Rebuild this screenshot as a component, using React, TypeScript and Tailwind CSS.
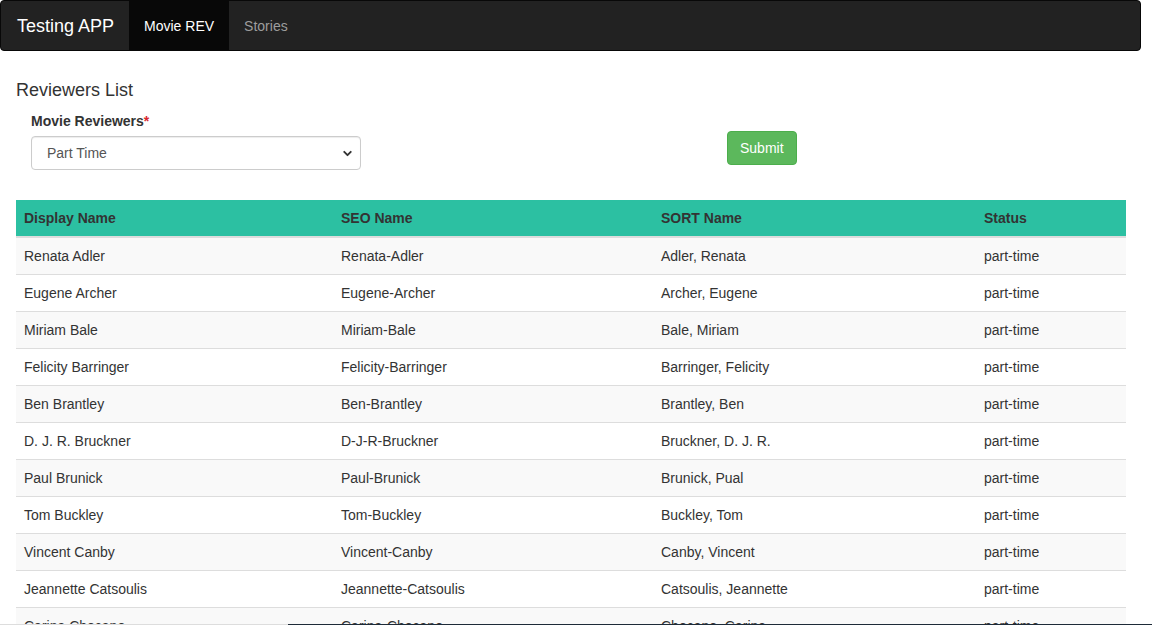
import { ChevronDown } from "lucide-react";

const reviewers = [
  ["Renata Adler", "Renata-Adler", "Adler, Renata"],
  ["Eugene Archer", "Eugene-Archer", "Archer, Eugene"],
  ["Miriam Bale", "Miriam-Bale", "Bale, Miriam"],
  ["Felicity Barringer", "Felicity-Barringer", "Barringer, Felicity"],
  ["Ben Brantley", "Ben-Brantley", "Brantley, Ben"],
  ["D. J. R. Bruckner", "D-J-R-Bruckner", "Bruckner, D. J. R."],
  ["Paul Brunick", "Paul-Brunick", "Brunick, Pual"],
  ["Tom Buckley", "Tom-Buckley", "Buckley, Tom"],
  ["Vincent Canby", "Vincent-Canby", "Canby, Vincent"],
  ["Jeannette Catsoulis", "Jeannette-Catsoulis", "Catsoulis, Jeannette"],
  ["Carina Chocano", "Carina-Chocano", "Chocano, Carina"],
];

function NavBar() {
  return (
    <nav className="flex h-[51px] items-stretch rounded-[4px] border border-[#080808] bg-[#222222]">
      <a className="flex items-center pl-[16px] pr-[15px] text-[18px] text-white" href="#">
        Testing APP
      </a>
      <a className="flex items-center bg-[#080808] px-[15px] text-[14px] text-white" href="#">
        Movie REV
      </a>
      <a className="flex items-center px-[15px] text-[14px] text-[#9d9d9d]" href="#">
        Stories
      </a>
    </nav>
  );
}

export default function App() {
  return (
    <div
      className="relative w-[1141px] bg-white text-[14px] leading-[20px] text-[#333333]"
      style={{ fontFamily: '"Liberation Sans", Arial, sans-serif' }}
    >
      <NavBar />

      <div className="px-[16px]">
        <h3 className="mt-[29px] text-[18px] leading-[20px]">Reviewers List</h3>

        <div className="mt-[11px] flex items-start">
          <div className="ml-[15px] w-[330px]">
            <label className="block font-bold">
              Movie Reviewers<span className="text-[#d9262f]">*</span>
            </label>
            <div className="relative mt-[5px]">
              <select
                className="h-[34px] w-full appearance-none rounded-[4px] border border-[#cccccc] bg-white pl-[15px] text-[14px] text-[#555555] shadow-[inset_0_1px_1px_rgba(0,0,0,0.075)]"
                defaultValue="part-time"
              >
                <option value="all">All</option>
                <option value="full-time">Full Time</option>
                <option value="part-time">Part Time</option>
              </select>
              <ChevronDown
                className="pointer-events-none absolute right-[7px] top-[11px] h-[13px] w-[13px] text-[#333333]"
                strokeWidth={3.5}
              />
            </div>
          </div>
          <button className="ml-[366px] mt-[20px] h-[34px] rounded-[4px] border border-[#4cae4c] bg-[#5cb85c] px-[12px] text-[14px] text-white">
            Submit
          </button>
        </div>

        <table className="mt-[30px] w-[1110px] table-fixed border-collapse">
          <colgroup>
            <col className="w-[317px]" />
            <col className="w-[320px]" />
            <col className="w-[323px]" />
            <col className="w-[150px]" />
          </colgroup>
          <thead>
            <tr className="bg-[#2cc0a2]">
              {["Display Name", "SEO Name", "SORT Name", "Status"].map((h) => (
                <th className="h-[37px] border-b-2 border-[#dddddd] px-[8px] text-left font-bold" key={h}>
                  {h}
                </th>
              ))}
            </tr>
          </thead>
          <tbody>
            {reviewers.map((r, i) => (
              <tr className={i % 2 === 0 ? "bg-[#f9f9f9]" : "bg-white"} key={r[1]}>
                <td className="h-[37px] border-t border-[#dddddd] px-[8px]">{r[0]}</td>
                <td className="border-t border-[#dddddd] px-[8px]">{r[1]}</td>
                <td className="border-t border-[#dddddd] px-[8px]">{r[2]}</td>
                <td className="border-t border-[#dddddd] px-[8px]">part-time</td>
              </tr>
            ))}
          </tbody>
        </table>
      </div>

      <div className="fixed bottom-0 left-0 flex h-px w-[1152px]">
        <div className="w-[288px] bg-[#dddddd]" />
        <div className="flex-1 bg-[#1e2b38]" />
      </div>
    </div>
  );
}
